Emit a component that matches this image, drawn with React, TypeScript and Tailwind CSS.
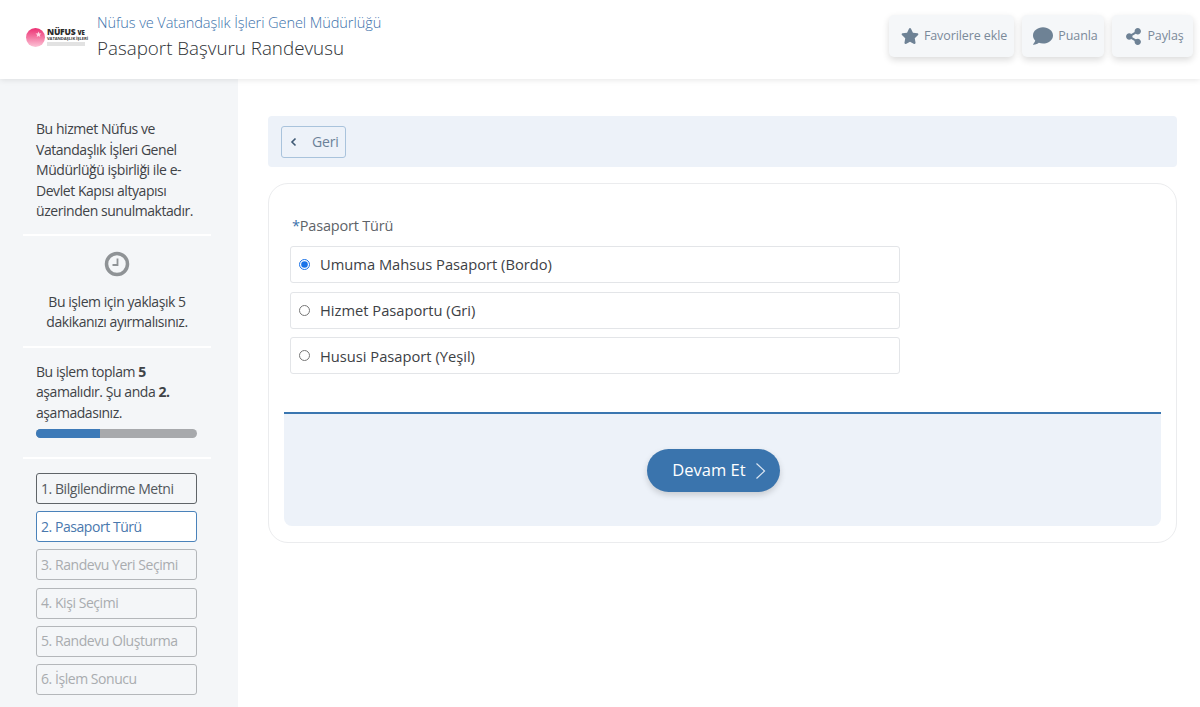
import { FaStar, FaComment, FaShareAlt } from "react-icons/fa";

const steps = [
  { label: "1. Bilgilendirme Metni", cls: "border-[#5f6468] text-[#53585c]" },
  { label: "2. Pasaport Türü", cls: "border-[#4a82ba] bg-white text-[#4a78ad]" },
  { label: "3. Randevu Yeri Seçimi", cls: "border-[#b4b7ba] text-[#a9acaf]" },
  { label: "4. Kişi Seçimi", cls: "border-[#b4b7ba] text-[#a9acaf]" },
  { label: "5. Randevu Oluşturma", cls: "border-[#b4b7ba] text-[#a9acaf]" },
  { label: "6. İşlem Sonucu", cls: "border-[#b4b7ba] text-[#a9acaf]" },
];

const options = ["Umuma Mahsus Pasaport (Bordo)", "Hizmet Pasaportu (Gri)", "Hususi Pasaport (Yeşil)"];

function Logo() {
  return (
    <div className="-mt-[5px] flex h-[20px] w-[60px] items-center">
      <svg className="shrink-0" width="19" height="19" viewBox="0 0 19 19">
        <defs>
          <linearGradient id="logoFill" x1="0" y1="0" x2="0" y2="1">
            <stop offset="0" stopColor="#ec2f72" />
            <stop offset="1" stopColor="#fcc3d6" />
          </linearGradient>
        </defs>
        <circle cx="9.5" cy="9.5" r="9.5" fill="url(#logoFill)" />
        <path d="M12.5 3.5l.8 2 2.1.1-1.6 1.4.5 2-1.8-1.1-1.8 1.1.5-2-1.6-1.4 2.1-.1z" fill="#ffd9e6" />
      </svg>
      <div className="ml-[2px] flex flex-col leading-none">
        <span className="whitespace-nowrap text-[8.5px] font-extrabold tracking-[-0.2px] text-[#2a2a2a]">
          NÜFUS <span className="text-[6px]">VE</span>
        </span>
        <span className="whitespace-nowrap text-[4.2px] font-bold tracking-[-0.1px] text-[#444]">VATANDAŞLIK İŞLERİ</span>
        <span className="mt-px h-[4px] w-[38px] bg-[#e2e2e2]" />
      </div>
    </div>
  );
}

function HeaderButton({ icon, label, className }: { icon: React.ReactNode; label: string; className: string }) {
  return (
    <button className={`flex h-[42px] items-center justify-center gap-[5px] rounded-[5px] bg-[#f5f7f9] text-[12.5px] tracking-[-0.1px] text-[#7b8a99] shadow-[0_3px_7px_rgba(0,0,0,0.14)] ${className}`}>
      {icon}
      <span>{label}</span>
    </button>
  );
}

export default function App() {
  return (
    <div className="flex h-[707px] w-[1200px] flex-col overflow-hidden bg-white font-['Open_Sans',sans-serif] text-[14px] tracking-[-0.45px] text-[#3f4347]">
      {/* Header */}
      <header className="z-10 flex h-[79px] shrink-0 items-center justify-between bg-white pl-[26px] pr-[7px] shadow-[0_1px_6px_rgba(0,0,0,0.1)]">
        <div className="flex items-center">
          <Logo />
          <div className="ml-[11px] -mt-[6px]">
            <div className="text-[14.6px] leading-[22px] font-light tracking-[-0.1px] text-[#3d72ab]">Nüfus ve Vatandaşlık İşleri Genel Müdürlüğü</div>
            <div className="text-[18.8px] leading-[30px] font-light tracking-normal text-[#2e3135]">Pasaport Başvuru Randevusu</div>
          </div>
        </div>
        <div className="-mt-[7px] flex gap-2">
          <HeaderButton className="w-[125px] pl-[5px]" icon={<FaStar className="text-[18px] text-[#6e8295]" />} label="Favorilere ekle" />
          <HeaderButton className="w-[82px] pl-[5px]" icon={<FaComment className="text-[20px] text-[#6e8295]" />} label="Puanla" />
          <HeaderButton className="w-[81px] pl-[4px]" icon={<FaShareAlt className="text-[17px] text-[#6e8295]" />} label="Paylaş" />
        </div>
      </header>

      <div className="flex min-h-0 flex-1">
        {/* Sidebar */}
        <aside className="w-[238px] shrink-0 bg-[#f4f6f8] pl-[23px] pr-[27px] pt-[40px]">
          <div className="border-b-2 border-white pl-[13px] pr-[14px] pb-[12px] leading-[20.5px]">
            Bu hizmet Nüfus ve Vatandaşlık İşleri Genel Müdürlüğü işbirliği ile e-Devlet Kapısı altyapısı üzerinden sunulmaktadır.
          </div>
          <div className="flex flex-col items-center border-b-2 border-white pb-[13px] pt-[15px] text-center leading-[20.5px]">
            <svg width="26" height="26" viewBox="0 0 26 26" fill="none" stroke="#8f9396">
              <circle cx="13" cy="13" r="10.5" strokeWidth="3.5" />
              <path d="M13.5 7.5V14H8.5" strokeWidth="1.8" />
            </svg>
            <div className="mt-[15px]">
              Bu işlem için yaklaşık 5<br />dakikanızı ayırmalısınız.
            </div>
          </div>
          <div className="border-b-2 border-white pl-[13px] pr-[14px] pb-[19px] pt-[14px] leading-[20.5px]">
            <div>
              Bu işlem toplam <b>5</b> aşamalıdır. Şu anda <b>2.</b> aşamadasınız.
            </div>
            <div className="mt-[6px] h-[9px] overflow-hidden rounded-full bg-[#a7a9ac]">
              <div className="h-full w-[40%] bg-[#3d7ab8]" />
            </div>
          </div>
          <div className="ml-[13px] mr-[14px] mt-[14px] flex flex-col gap-[7.2px]">
            {steps.map((s) => (
              <div key={s.label} className={`flex h-[31px] items-center whitespace-nowrap rounded-[3px] border pb-[1px] pl-[4px] ${s.cls}`}>
                {s.label}
              </div>
            ))}
          </div>
        </aside>

        {/* Main */}
        <main className="flex-1 pl-[30px] pr-[23px] pt-[37px]">
          <div className="flex h-[51px] items-center rounded-[4px] bg-[#edf2f9] pl-[13px]">
            <button className="flex h-[32px] w-[65px] items-center rounded-[3px] border border-[#a9c3dc] pl-[8px] tracking-[-0.2px] text-[#6b8198]">
              <svg width="8" height="10" viewBox="0 0 8 10" fill="none" stroke="#3f5a75" strokeWidth="1.6">
                <path d="M5.5 1.5L2 5l3.5 3.5" />
              </svg>
              <span className="ml-[14px]">Geri</span>
            </button>
          </div>

          <div className="mt-[16px] h-[360px] rounded-[20px] border border-[#ebecee] px-[15px] pt-[32px]">
            <div className="pl-[8px] text-[14.5px] leading-[20px] tracking-[-0.2px] text-[#5e6368]">
              <span className="text-[#3d72ab]">*</span>Pasaport Türü
            </div>
            <div className="ml-[6px] mt-[10px] flex w-[610px] flex-col gap-[8.6px]">
              {options.map((o, i) => (
                <label key={o} className="flex h-[37px] items-center rounded-[3px] border border-[#e3e5e8] pl-[8px] text-[14.7px] tracking-normal text-[#3d4145]">
                  <input type="radio" name="tur" defaultChecked={i === 0} className="h-[11px] w-[11px] accent-[#1a73e8]" />
                  <span className="ml-[10px]">{o}</span>
                </label>
              ))}
            </div>
            <div className="mt-[38px] flex h-[114px] items-center justify-center rounded-b-[8px] border-t-2 border-[#3a76b0] bg-[#edf2f9] pr-[18px]">
              <button className="flex h-[43px] w-[133px] items-center justify-center rounded-full bg-[#3a74ad] pl-[11px] pt-[1px] text-[16.5px] tracking-normal text-white shadow-[0_3px_6px_rgba(0,0,0,0.16)]">
                Devam Et
                <svg className="ml-[9px]" width="11" height="18" viewBox="0 0 11 18" fill="none" stroke="#dbe6f2" strokeWidth="1.2">
                  <path d="M1.5 1.5L9.5 9l-8 7.5" />
                </svg>
              </button>
            </div>
          </div>
        </main>
      </div>
    </div>
  );
}
